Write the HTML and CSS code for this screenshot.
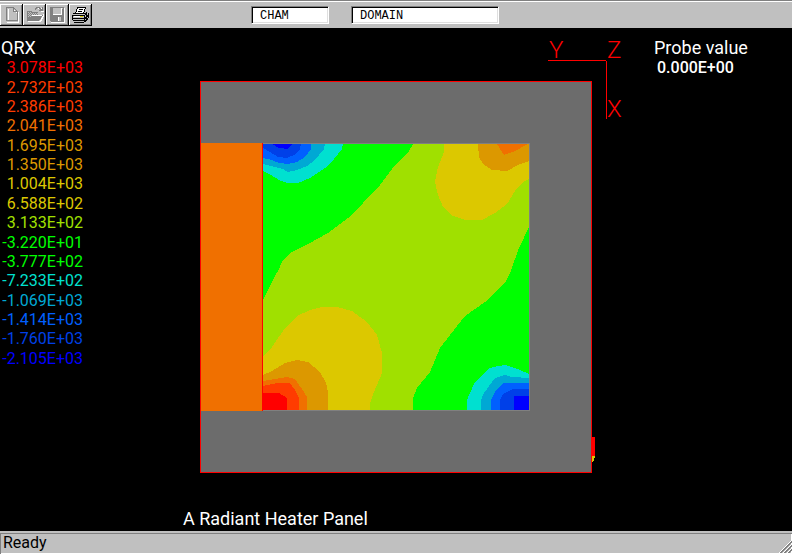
FILE: index.html
```html
<!DOCTYPE html>
<html lang="en">
<head>
    <meta charset="UTF-8">
    <meta name="viewport" content="width=device-width, initial-scale=1.0">
    <title>A Radiant Heater Panel</title>
    <link rel="stylesheet" href="styles.css">
</head>
<body>
    <header class="toolbar">
        <div class="buttons">
            <button class="tool" type="button" aria-label="New" disabled>
                <svg viewBox="0 0 23 22">
                    <path class="hi" d="M7 18.5H18.5V8M13 5L17 9M8.500 17V5"/>
                    <path class="dim" d="M6.500 3.500H13.500L17.500 7.500V16.500H6.500ZM13.500 3.500V7.500H17.500"/>
                </svg>
            </button>
            <button class="tool" type="button" aria-label="Open" disabled>
                <svg viewBox="0 0 23 22">
                    <path class="hi" d="M5 17.500H17.500L21 10.500M15 4.500H19M18 7.500H21"/>
                    <path class="dim-fill" d="M4 7H8L9 8H15V11H20L16 17H4Z"/>
                    <path class="dots" d="M5 8.500H9M6 9.500H15M5 10.500H15M6 11.500H10M5 12.500H8"/>
                    <path class="hi" d="M9 11.500H19"/>
                    <path class="dim" d="M12 5.500L14 3.500H16L19 6.500M19.500 3V7M16 6.500H20"/>
                </svg>
            </button>
            <button class="tool" type="button" aria-label="Save" disabled>
                <svg viewBox="0 0 23 22">
                    <path class="hi" d="M5 18.500H18.500V4"/>
                    <path class="dim-fill" d="M4 3H18V18H5L4 17Z"/>
                    <path class="face-fill" d="M7 4H15V10H7ZM16 4H17V5H16ZM12 13H15V17H12Z"/>
                    <path class="hi" d="M7 10.500H15.500V4M12.500 13V17"/>
                </svg>
            </button>
            <button class="tool" type="button" aria-label="Print">
                <svg viewBox="0 0 23 22">
                    <path class="paper" d="M9 3H17L15 9H6Z"/>
                    <path class="ink" d="M8 3.500H17M8.500 4L6.500 9M16.500 4L14.500 9M10 5.500H14M9 7.500H13"/>
                    <path class="face-fill" d="M5 9H17L19 8V14L16 18H5L3 16V11Z"/>
                    <path class="ink" d="M4 9.500H16M3.500 11V16M4 11.500H15M4 14.500H15M4 16.500H15M5 18.500H15M15.500 11V18M17 8.500H18M19.500 9V14M16 10.500L18 8.500M16 14.500L19 11.500M16 17.500L19 14.500M17.500 10V16"/>
                    <path class="white-line" d="M5 12.500H14"/>
                    <path class="yellow-line" d="M11 12.500H14"/>
                </svg>
            </button>
        </div>
        <input class="field field-small" type="text" aria-label="Object name" value="CHAM">
        <input class="field field-wide" type="text" aria-label="Object type" value="DOMAIN">
    </header>

    <main class="viewer">
        <section class="legend">
            <h2 class="label">QRX</h2>
            <ul class="scale">
                <li class="c-red">3.078E+03</li>
                <li class="c-scarlet">2.732E+03</li>
                <li class="c-scarlet">2.386E+03</li>
                <li class="c-orange">2.041E+03</li>
                <li class="c-amber">1.695E+03</li>
                <li class="c-amber">1.350E+03</li>
                <li class="c-yellow">1.004E+03</li>
                <li class="c-yellow">6.588E+02</li>
                <li class="c-lime">3.133E+02</li>
                <li class="c-green">-3.220E+01</li>
                <li class="c-green">-3.777E+02</li>
                <li class="c-cyan">-7.233E+02</li>
                <li class="c-teal">-1.069E+03</li>
                <li class="c-sky">-1.414E+03</li>
                <li class="c-blue">-1.760E+03</li>
                <li class="c-deep">-2.105E+03</li>
            </ul>
        </section>

        <section class="model">
            <svg class="plot" viewBox="200 36 424 438" role="img" aria-label="Contour plot of QRX">
                <!-- casing and heater block -->
                <rect class="casing" x="200.500" y="81.500" width="391" height="391"/>
                <rect class="f-orange" x="201" y="143" width="61" height="268"/>
                <path class="inner-edge" d="M263 143.500H529.500V410.500H263"/>
                <path class="red-line" d="M262.500 143V411"/>

                <!-- radiation field -->
                <rect class="f-lime" x="263" y="144" width="266" height="266"/>
                <polygon class="f-green" points="263,144 413,144 409,151 395,165 380,185 363,203 348,218 328,233 308,244 292,252 283,260 278,271 275,276 268,290 263,300"/>
                <polygon class="f-green" points="529,227 519,248 510,273 505,283 485,302 465,316 450,335 440,348 430,372 417,388 413,398 413,410 529,410"/>

                <!-- top left -->
                <polygon class="f-cyan" points="263,144 343,144 342,149 334,159 325,168 310,178 298,183 287,183 279,180 271,175 263,171"/>
                <polygon class="f-teal" points="263,144 325,144 324,149 315,160 307,166 297,170 288,172 283,169 271,166 263,164"/>
                <polygon class="f-sky" points="263,144 311,144 311,149 305,157 297,162 288,164 279,163 272,160 263,158"/>
                <polygon class="f-blue" points="263,144 301,144 300,149 294,155 287,158 278,157 270,152 263,148"/>
                <polygon class="f-deep" points="272,144 292,144 288,149 279,148"/>

                <!-- top right -->
                <polygon class="f-yellow" points="444,144 444,152 438,167 435,182 438,195 443,207 453,216 465,220 482,220 495,213 507,204 515,191 523,182 529,179 529,144"/>
                <polygon class="f-amber" points="478,144 479,157 483,164 492,170 507,171 518,165 529,161 529,144"/>
                <polygon class="f-orange" points="497,144 504,155 515,151 528,144"/>

                <!-- bottom left -->
                <polygon class="f-yellow" points="263,357 272,347 285,328 297,316 310,310 322,307 337,307 352,311 367,322 377,335 382,353 382,373 374,392 370,403 370,410 263,410"/>
                <polygon class="f-amber" points="263,375 272,371 285,363 297,360 308,362 320,372 326,383 328,392 328,410 263,410"/>
                <polygon class="f-orange" points="263,381 287,377 295,379 304,392 307,397 307,410 263,410"/>
                <polygon class="f-scarlet" points="263,386 277,383 290,383 295,390 299,398 299,410 263,410"/>
                <polygon class="f-red" points="263,393 279,393 287,398 287,410 263,410"/>

                <!-- bottom right -->
                <polygon class="f-cyan" points="529,374 518,369 505,365 498,366 490,368 475,382 469,395 467,400 467,410 529,410"/>
                <polygon class="f-teal" points="529,378 512,377 505,375 495,378 484,393 481,400 481,410 529,410"/>
                <polygon class="f-sky" points="529,383 503,383 495,392 491,400 491,410 529,410"/>
                <polygon class="f-blue" points="529,389 513,389 503,394 500,400 500,410 529,410"/>
                <polygon class="f-deep" points="529,396 514,396 514,410 529,410"/>

                <!-- probe -->
                <path class="f-red" d="M591 437H595V456H591Z"/>
                <path class="f-yellow" d="M592 456H595L594 460L593 462H592Z"/>

                <!-- axes -->
                <path class="red-line" d="M548 60.500H606M606.500 61V119"/>
                <text class="axis" x="549" y="58">Y</text>
                <text class="axis" x="607" y="58">Z</text>
                <text class="axis" x="607" y="117">X</text>
            </svg>
            <h1 class="label">A Radiant Heater Panel</h1>
        </section>

        <section class="probe">
            <h2 class="label">Probe value</h2>
            <p class="probe-value">0.000E+00</p>
        </section>
    </main>

    <footer class="status">
        <span>Ready</span>
        <svg class="grip" viewBox="0 0 13 13">
            <path class="grip-light" d="M0 13L13 0M4 13L13 4M8 13L13 8"/>
            <path class="grip-dark" d="M1 13L13 1M2 13L13 2M5 13L13 5M6 13L13 6M9 13L13 9M10 13L13 10"/>
        </svg>
    </footer>
</body>
</html>
```

FILE: styles.css
```css
* {
    margin: 0;
    padding: 0;
    box-sizing: border-box;
}

body {
    font-family: Roboto, "Liberation Sans", sans-serif;
    font-size: 16px;
    line-height: 20px;
    background: #000;
    color: #fff;
    min-height: 100vh;
    display: flex;
    flex-direction: column;
}

/* toolbar */
.toolbar {
    display: flex;
    align-items: center;
    height: 28px;
    padding-top: 2px;
    background: #c0c0c0;
    box-shadow: inset 0 1px #808080, inset 0 2px #fff;
}

.buttons {
    display: flex;
    width: 251px;
}

.tool {
    width: 23px;
    height: 22px;
    border: none;
    background: #c0c0c0;
    box-shadow: inset -1px -1px #000, inset 1px 1px #fff, inset -2px -2px #808080;
}

.tool svg {
    display: block;
    width: 23px;
    height: 22px;
    fill: none;
    shape-rendering: crispEdges;
}

.hi, .white-line { stroke: #fff; }
.dim { stroke: #808080; }
.dim-fill { fill: #808080; }
.dots { stroke: #c0c0c0; stroke-dasharray: 1 1; }
.face-fill { fill: #c0c0c0; }
.paper { fill: #fff; }
.ink { stroke: #000; }
.yellow-line { stroke: #e0d000; }

.field {
    height: 18px;
    padding: 2px 8px 0;
    border: 1px solid;
    border-color: #808080 #fff #fff #808080;
    background: #fff;
    box-shadow: inset 1px 1px #000, inset -1px -1px #dfdfdf;
    color: #000;
    font-family: "Liberation Mono", monospace;
    font-size: 12px;
}

.field-small {
    width: 78px;
    margin-right: 22px;
}

.field-wide {
    width: 148px;
}

/* viewer */
.viewer {
    flex: 1;
    display: grid;
    grid-template-columns: 183px 1fr 138px;
}

.label {
    font-size: 18px;
    font-weight: 400;
}

.legend, .probe {
    padding-top: 10px;
}

.legend .label {
    padding-left: 1px;
}

.scale {
    display: grid;
    grid-template-rows: repeat(16, 1fr);
    align-items: center;
    height: 310px;
    width: 83px;
    list-style: none;
    line-height: 19px;
    text-align: right;
    white-space: nowrap;
}

.probe-value {
    padding-left: 3px;
    font-weight: 500;
}

.c-red { color: #ff0000; }
.c-scarlet { color: #ff3c00; }
.c-orange { color: #f07000; }
.c-amber { color: #dc9800; }
.c-yellow { color: #dcc800; }
.c-lime { color: #a0e000; }
.c-green { color: #00ff00; }
.c-cyan { color: #00e0d0; }
.c-teal { color: #00a8d4; }
.c-sky { color: #0060ff; }
.c-blue { color: #0040e8; }
.c-deep { color: #0000ff; }

.f-red { fill: #ff0000; }
.f-scarlet { fill: #ff3c00; }
.f-orange { fill: #f07000; }
.f-amber { fill: #dc9800; }
.f-yellow { fill: #dcc800; }
.f-lime { fill: #a0e000; }
.f-green { fill: #00ff00; }
.f-cyan { fill: #00e0d0; }
.f-teal { fill: #00a8d4; }
.f-sky { fill: #0060ff; }
.f-blue { fill: #0040e8; }
.f-deep { fill: #0000ff; }

.model {
    padding-top: 8px;
}

.plot {
    display: block;
    width: 424px;
    height: 438px;
    margin: 0 0 35px 17px;
    shape-rendering: crispEdges;
}

.casing {
    fill: #6c6c6c;
    stroke: #ff0000;
}

.red-line {
    stroke: #ff0000;
}

.inner-edge {
    fill: none;
    stroke: #808080;
}

.axis {
    fill: #ff0000;
    font-size: 24px;
    font-weight: 300;
}

/* status bar */
.status {
    display: flex;
    justify-content: space-between;
    align-items: flex-end;
    height: 23px;
    padding: 0 0 1px 3px;
    background: #c0c0c0;
    border-top: 2px solid #c0c0c0;
    box-shadow: inset 1px 1px #808080, inset -1px -1px #fff;
    color: #000;
}

.grip {
    width: 13px;
    height: 13px;
    shape-rendering: crispEdges;
}

.grip-light { stroke: #fff; }
.grip-dark { stroke: #808080; }
```
